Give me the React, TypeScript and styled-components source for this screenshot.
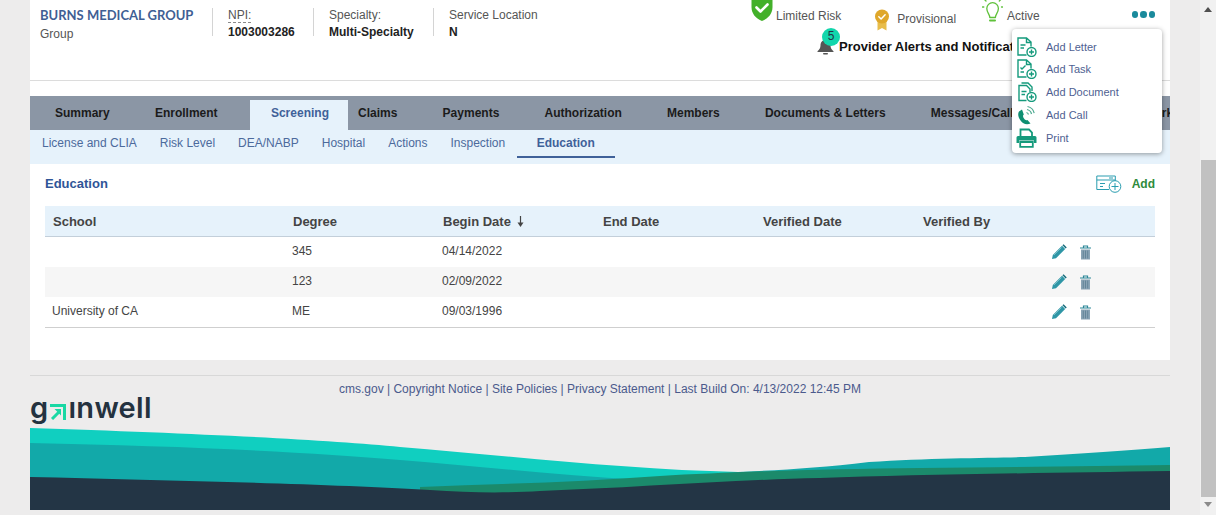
import React from 'react'
import styled, { createGlobalStyle } from 'styled-components'

const GlobalStyle = createGlobalStyle`
  html, body {
    margin: 0;
    padding: 0;
    height: 515px;
    overflow: hidden;
    background: #edecec;
    font-family: "Liberation Sans", Arial, sans-serif;
  }
`

const Shell = styled.div`
  display: flex;
  width: 1216px;
  height: 515px;
  overflow: hidden;
`

const Main = styled.div`
  flex: 1;
  min-width: 0;
  padding: 0 30px;
`

const Panel = styled.div`
  height: 360px;
  background: #fff;
`

/* header */

const Header = styled.header`
  position: relative;
  display: flex;
  justify-content: space-between;
  height: 80px;
  border-bottom: 1px solid #dcdcdc;
  margin-bottom: 15px;
`

const MemberInfo = styled.div`
  display: flex;
  align-items: flex-start;
  padding: 8px 0 0 10px;
`

const MemberName = styled.div`
  width: 172px;
  flex: none;
`

const Name = styled.div`
  font-family: Lato, "Liberation Sans", sans-serif;
  font-size: 13px;
  font-weight: 700;
  line-height: 14px;
  color: #3f5f94;
`

const NameType = styled.div`
  margin-top: 5px;
  font-size: 12px;
  line-height: 14px;
  color: #555;
`

const InfoCell = styled.div<{ $width: number }>`
  flex: none;
  box-sizing: border-box;
  width: ${(p) => p.$width}px;
  height: 28px;
  padding-left: 15px;
  border-left: 1px solid #d4d4d4;
`

const InfoLabel = styled.div<{ $dashed?: boolean }>`
  width: fit-content;
  font-size: 12px;
  line-height: 14px;
  color: #555;
  border-bottom: 1px ${(p) => (p.$dashed ? 'dashed #8a8a8a' : 'solid transparent')};
`

const InfoValue = styled.div`
  margin-top: 2px;
  font-size: 12px;
  font-weight: 700;
  line-height: 14px;
  color: #222;
`

const Alerts = styled.div`
  width: 419px;
  flex: none;
`

const StatusRow = styled.div`
  display: flex;
  align-items: flex-start;
  height: 32px;
`

const Status = styled.div<{ $left: number; $top: number; $gap: number }>`
  display: flex;
  align-items: flex-start;
  gap: ${(p) => p.$gap}px;
  margin: ${(p) => p.$top}px 0 0 ${(p) => p.$left}px;
  font-size: 12px;
  line-height: 14px;
  color: #555;
  white-space: nowrap;

  svg {
    flex: none;
    display: block;
  }
`

const StatusLabel = styled.span<{ $top: number }>`
  display: block;
  margin-top: ${(p) => p.$top}px;
`

const Dots = styled.div`
  display: flex;
  gap: 2px;
  margin: 11px 0 0 92px;

  i {
    width: 6.5px;
    height: 6.5px;
    border-radius: 50%;
    background: #1a8a9c;
  }
`

const NoticeRow = styled.div`
  display: flex;
  align-items: center;
  height: 16px;
  margin: 7px 0 0 66px;
  white-space: nowrap;
`

const BellWrap = styled.div`
  position: relative;
  width: 22px;
  height: 16px;
  flex: none;

  svg {
    display: block;
  }
`

const Badge = styled.div`
  position: absolute;
  top: -11px;
  left: 5px;
  width: 18px;
  height: 18px;
  border-radius: 50%;
  background: #12d6ac;
  font-size: 12px;
  line-height: 17px;
  text-align: center;
  color: #234;
`

const NoticeText = styled.div`
  font-size: 13px;
  font-weight: 700;
  line-height: 16px;
  color: #111;
`

const Menu = styled.div`
  position: absolute;
  z-index: 5;
  top: 29px;
  right: 8px;
  box-sizing: border-box;
  width: 150px;
  height: 124px;
  padding: 6.3px 0 0 4px;
  background: #fff;
  border-radius: 4px;
  box-shadow: 0 1px 5px rgba(0, 0, 0, 0.38);
`

const MenuItem = styled.div`
  display: flex;
  align-items: center;
  gap: 9px;
  height: 22.75px;
  font-size: 11px;
  color: #4f5f92;

  svg {
    flex: none;
    display: block;
  }
`

/* tabs */

const TabBar = styled.nav`
  display: flex;
  align-items: flex-end;
  height: 34px;
  padding-left: 2.4px;
  overflow: hidden;
  background: #8b96a5;
  white-space: nowrap;
`

const Tab = styled.div<{ $active?: boolean; $pushed?: boolean }>`
  flex: none;
  height: ${(p) => (p.$active ? 30 : 34)}px;
  padding: ${(p) => (p.$active ? '0 19.5px 0 20.5px' : '0 22.6px')};
  margin: ${(p) => (p.$active ? '0 -13px 0 10.3px' : p.$pushed ? '0 0 0 78px' : 0)};
  font-size: 12px;
  font-weight: 700;
  line-height: ${(p) => (p.$active ? 26 : 34)}px;
  color: ${(p) => (p.$active ? '#3f6199' : '#1b1b1b')};
  background: ${(p) => (p.$active ? '#e6f2fb' : 'transparent')};
`

const SubBar = styled.div`
  display: flex;
  height: 34px;
  padding-left: 0.5px;
  background: #e6f2fb;
  white-space: nowrap;
`

const SubTab = styled.div<{ $active?: boolean }>`
  flex: none;
  box-sizing: border-box;
  height: 28px;
  padding: 0 ${(p) => (p.$active ? 20 : 11.5)}px;
  font-size: 12px;
  font-weight: ${(p) => (p.$active ? 700 : 400)};
  line-height: 27px;
  color: ${(p) => (p.$active ? '#3f6199' : '#4c6a9c')};
  border-bottom: 2px solid ${(p) => (p.$active ? '#3f6199' : 'transparent')};
`

/* education table */

const Content = styled.section`
  padding: 0 15px;
`

const TitleRow = styled.div`
  display: flex;
  align-items: center;
  justify-content: space-between;
  height: 38px;
  margin-bottom: 4px;
`

const Title = styled.h2`
  margin: 0;
  font-size: 13px;
  font-weight: 700;
  color: #2f5597;
`

const AddButton = styled.div`
  display: flex;
  align-items: center;
  gap: 10px;
  padding-top: 2px;
  font-size: 12px;
  font-weight: 700;
  color: #2e8b3c;

  svg {
    display: block;
  }
`

const Row = styled.div<{ $head?: boolean; $alt?: boolean; $last?: boolean }>`
  display: grid;
  grid-template-columns: 240px 150px 160px 160px 160px 130px 1fr;
  align-items: center;
  height: 30px;
  background: ${(p) => (p.$head ? '#e6f2fb' : p.$alt ? '#f6f6f6' : '#fff')};
  border-bottom: ${(p) =>
    p.$head ? '1px solid #c3cfda' : p.$last ? '1px solid #cfcfcf' : 'none'};
`

const HeadCell = styled.div`
  display: flex;
  align-items: center;
  gap: 5px;
  padding-left: 8px;
  font-size: 13px;
  font-weight: 700;
  color: #444;

  svg {
    display: block;
  }
`

const Cell = styled.div`
  padding: 0 0 2px 7px;
  font-size: 12px;
  color: #444;
`

const Actions = styled.div`
  display: flex;
  align-items: center;
  gap: 12px;
  padding-left: 6px;

  svg {
    display: block;
  }
`

/* footer */

const Footer = styled.footer`
  margin-top: 15px;
  border-top: 1px solid #d8d8d8;
`

const FooterLinks = styled.div`
  padding-top: 6px;
  font-size: 12px;
  line-height: 14px;
  text-align: center;
  color: #4b5a8c;
`

const Logo = styled.div`
  display: flex;
  align-items: flex-end;
  box-sizing: border-box;
  height: 32px;
  padding-bottom: 2px;
  font-family: Inter, "Liberation Sans", sans-serif;
  font-size: 29px;
  font-weight: 600;
  line-height: 36px;
  letter-spacing: 0.3px;
  color: #24323f;

  svg {
    display: block;
    flex: none;
    margin: 0 2px 6px 2px;
  }
`

const Wave = styled.svg`
  display: block;
  width: 1140px;
  height: 82px;
`

/* fake browser scrollbar, the shot was taken with the page scrolled */

const Scrollbar = styled.div`
  flex: none;
  display: flex;
  flex-direction: column;
  align-items: center;
  width: 16px;
  height: 515px;
  background: #f1f1f1;
`

const ScrollArrow = styled.div<{ $down?: boolean }>`
  flex: none;
  width: 0;
  height: 0;
  margin-top: ${(p) => (p.$down ? 5 : 7)}px;
  border-left: 4px solid transparent;
  border-right: 4px solid transparent;
  border-top: ${(p) => (p.$down ? '5px solid #8b8b8b' : 'none')};
  border-bottom: ${(p) => (p.$down ? 'none' : '5px solid #505050')};
`

const ScrollThumb = styled.div`
  flex: none;
  width: 15px;
  height: 337px;
  margin-top: 148px;
  background: #c1c1c1;
`

/* icons */

const Shield = () => (
  <svg width="22" height="25" viewBox="0 0 22 25">
    <path d="M11 0 21.5 3.5V11c0 7-4.5 11.500-10.500 14C5 22.500.5 18 .5 11V3.500z" fill="#43b02a" />
    <path d="M5.500 11.500l4 4 7-7" fill="none" stroke="#fff" strokeWidth="2.600" strokeLinecap="round" strokeLinejoin="round" />
  </svg>
)

const Medal = () => (
  <svg width="16" height="22" viewBox="0 0 16 22">
    <path d="M3.500 12v9.500L8 19l4.500 2.500V12z" fill="#e8bd4a" />
    <circle cx="8" cy="7.500" r="7" fill="#dfa72a" />
    <path d="M4.800 7.800l2.300 2.200 4-4.200" fill="none" stroke="#fff" strokeWidth="1.500" strokeLinecap="round" strokeLinejoin="round" />
  </svg>
)

const Bulb = () => (
  <svg width="21" height="24" viewBox="0 0 21 24" fill="none" stroke="#5fc13a" strokeWidth="1.300" strokeLinecap="round" strokeLinejoin="round">
    <path d="M7.800 19.500c0-3-3-5-3-9a5.800 5.800 0 0 1 11.600 0c0 4-3 6-3 9z" />
    <path d="M8 22.500h5" strokeWidth="2" />
    <path d="M2.500 1.500 4 3M18.800 1.500 17.300 3M.5 9h1.300M19.500 9h1" />
  </svg>
)

const Bell = () => (
  <svg width="17" height="16" viewBox="0 0 17 16">
    <path d="M8.500 1C5 1 3.500 3.500 3.500 6.500c0 2.500-1.200 4-3 5.800v.7h16v-.7c-1.800-1.800-3-3.300-3-5.800C13.500 3.500 12 1 8.500 1z" fill="#555" />
    <rect x="6" y="14" width="5" height="1.600" rx=".8" fill="#555" />
  </svg>
)

const docPlus = (
  <>
    <circle cx="15.500" cy="15" r="4.500" fill="#fff" />
    <path d="M15.500 12.500v5M13 15h5" />
  </>
)

const LetterIcon = () => (
  <svg width="21" height="20" viewBox="0 0 21 20" fill="none" stroke="#159a7c" strokeWidth="1.400">
    <path d="M10.500 18H2V1h8.500L15 5v4.500M10.500 1v4.500H15" />
    <path d="M4.500 8h5M4.500 11h3.500" />
    {docPlus}
  </svg>
)

const TaskIcon = () => (
  <svg width="21" height="20" viewBox="0 0 21 20" fill="none" stroke="#159a7c" strokeWidth="1.400">
    <path d="M10.500 18H2V1h8.500L15 5v4.500M10.500 1v4.500H15" />
    <path d="M4.500 8.500l1.500 1.500 3.500-3.500M4.500 13h3.500" />
    {docPlus}
  </svg>
)

const DocumentIcon = () => (
  <svg width="21" height="20" viewBox="0 0 21 20" fill="none" stroke="#159a7c" strokeWidth="1.400">
    <path d="M10.500 18.500H3v-15h7.500l3.500 3.500v3" />
    <path d="M5.500 1h6.500l4 4v4" />
    <path d="M5.500 9.500h5M5.500 12.500h3.500" />
    {docPlus}
  </svg>
)

const CallIcon = () => (
  <svg width="21" height="20" viewBox="0 0 21 20" fill="none">
    <path d="M6 4.500 3 6.500c-2 3 0 8.500 4 11.500 2.500 1.500 5 1.500 7.500.5l-3-3.500c-1.500.5-2.500 0-3.500-1.500S6.500 10.500 7.800 9.500z" fill="#0f8f72" />
    <path d="M10.500 7.500c1 .3 1.700 1 2 2M11 4.500c2.300.5 4 2.200 4.500 4.500M11.500 1.500c3.500.7 6 3.200 6.700 6.700" stroke="#4aa98f" strokeWidth="1.200" />
  </svg>
)

const PrintIcon = () => (
  <svg width="21" height="20" viewBox="0 0 21 20">
    <path d="M4.500 8V1.500h8.500l3 3V8" fill="none" stroke="#159a7c" strokeWidth="1.800" />
    <path d="M2 8h17a1.500 1.500 0 0 1 1.500 1.500V15H18v-2.500H3V15H.5V9.500A1.500 1.500 0 0 1 2 8z" fill="#159a7c" />
    <path d="M4.200 14h12.600v4.800H4.200z" fill="none" stroke="#159a7c" strokeWidth="1.800" />
  </svg>
)

const AddIcon = () => (
  <svg width="26" height="18" viewBox="0 0 26 18" fill="none" stroke="#2a9db0" strokeWidth="1">
    <path d="M13 14.500H.8V1h18.500v5.500M.8 5h18.500" />
    <path d="M4 8.500h5M4 11.500h3M13 3h4" />
    <circle cx="19" cy="11.500" r="5.800" fill="#fff" />
    <path d="M19 8v7M15.500 11.500h7" />
  </svg>
)

const EditIcon = () => (
  <svg width="16" height="16" viewBox="0 0 16 16">
    <path d="M1 15l.8-4L11 1.800l3.200 3.200L5 14.200z" fill="#2f96a6" />
    <path d="M3 11l7.500-7.500" stroke="#8cc6cf" strokeWidth=".8" />
    <path d="M12 .8 15.200 4" stroke="#176d7d" strokeWidth="1.600" />
  </svg>
)

const TrashIcon = () => (
  <svg width="13" height="15" viewBox="0 0 13 15">
    <path d="M1 3h11M4.500 2.500V1h4v1.500" fill="none" stroke="#2c8798" strokeWidth="1.200" />
    <path d="M2 4.500h9V14.500H2z" fill="#8aa3b5" />
    <path d="M4.300 5.500v8M6.500 5.500v8M8.700 5.500v8" stroke="#5b7d92" strokeWidth=".8" />
  </svg>
)

const SortArrow = () => (
  <svg width="9" height="11" viewBox="0 0 9 11">
    <path d="M4.500 0v8" stroke="#444" strokeWidth="1.200" />
    <path d="M1.500 6.500h6L4.500 11z" fill="#444" />
  </svg>
)

const LogoArrow = () => (
  <svg width="16" height="16" viewBox="0 0 16 16">
    <path d="M0 1.500h14.500V16" fill="none" stroke="#19d8a4" strokeWidth="3" />
    <path d="M2 15 10 7" fill="none" stroke="#19d8a4" strokeWidth="3" />
    <path d="M4.500 5h6.500v6.500z" fill="#19d8a4" />
  </svg>
)

const tabs = [
  'Summary',
  'Enrollment',
  'Screening',
  'Claims',
  'Payments',
  'Authorization',
  'Members',
  'Documents & Letters',
  'Messages/Calls',
  'Workflow',
]

const subTabs = [
  'License and CLIA',
  'Risk Level',
  'DEA/NABP',
  'Hospital',
  'Actions',
  'Inspection',
  'Education',
]

const rows = [
  { school: '', degree: '345', begin: '04/14/2022' },
  { school: '', degree: '123', begin: '02/09/2022' },
  { school: 'University of CA', degree: 'ME', begin: '09/03/1996' },
]

const App: React.FC = () => (
  <Shell>
    <GlobalStyle />
    <Main>
      <Panel>
        <Header>
          <MemberInfo>
            <MemberName>
              <Name>BURNS MEDICAL GROUP</Name>
              <NameType>Group</NameType>
            </MemberName>
            <InfoCell $width={101}>
              <InfoLabel $dashed>NPI:</InfoLabel>
              <InfoValue>1003003286</InfoValue>
            </InfoCell>
            <InfoCell $width={120}>
              <InfoLabel>Specialty:</InfoLabel>
              <InfoValue>Multi-Specialty</InfoValue>
            </InfoCell>
            <InfoCell $width={120}>
              <InfoLabel>Service Location</InfoLabel>
              <InfoValue>N</InfoValue>
            </InfoCell>
          </MemberInfo>
          <Alerts>
            <StatusRow>
              <Status $left={0} $top={-4} $gap={3}>
                <Shield />
                <StatusLabel $top={13}>Limited Risk</StatusLabel>
              </Status>
              <Status $left={33} $top={9} $gap={7}>
                <Medal />
                <StatusLabel $top={3}>Provisional</StatusLabel>
              </Status>
              <Status $left={26} $top={-2} $gap={4}>
                <Bulb />
                <StatusLabel $top={11}>Active</StatusLabel>
              </Status>
              <Dots>
                <i />
                <i />
                <i />
              </Dots>
            </StatusRow>
            <NoticeRow>
              <BellWrap>
                <Bell />
                <Badge>5</Badge>
              </BellWrap>
              <NoticeText>Provider Alerts and Notifications</NoticeText>
            </NoticeRow>
          </Alerts>
          <Menu>
            <MenuItem>
              <LetterIcon />
              Add Letter
            </MenuItem>
            <MenuItem>
              <TaskIcon />
              Add Task
            </MenuItem>
            <MenuItem>
              <DocumentIcon />
              Add Document
            </MenuItem>
            <MenuItem>
              <CallIcon />
              Add Call
            </MenuItem>
            <MenuItem>
              <PrintIcon />
              Print
            </MenuItem>
          </Menu>
        </Header>

        <TabBar>
          {tabs.map((t) => (
            <Tab key={t} $active={t === 'Screening'} $pushed={t === 'Workflow'}>
              {t}
            </Tab>
          ))}
        </TabBar>
        <SubBar>
          {subTabs.map((t) => (
            <SubTab key={t} $active={t === 'Education'}>
              {t}
            </SubTab>
          ))}
        </SubBar>

        <Content>
          <TitleRow>
            <Title>Education</Title>
            <AddButton>
              <AddIcon />
              Add
            </AddButton>
          </TitleRow>
          <Row $head>
            <HeadCell>School</HeadCell>
            <HeadCell>Degree</HeadCell>
            <HeadCell>
              Begin Date
              <SortArrow />
            </HeadCell>
            <HeadCell>End Date</HeadCell>
            <HeadCell>Verified Date</HeadCell>
            <HeadCell>Verified By</HeadCell>
            <HeadCell />
          </Row>
          {rows.map((r, i) => (
            <Row key={r.begin} $alt={i === 1} $last={i === rows.length - 1}>
              <Cell>{r.school}</Cell>
              <Cell>{r.degree}</Cell>
              <Cell>{r.begin}</Cell>
              <Cell />
              <Cell />
              <Cell />
              <Actions>
                <EditIcon />
                <TrashIcon />
              </Actions>
            </Row>
          ))}
        </Content>
      </Panel>

      <Footer>
        <FooterLinks>
          cms.gov | Copyright Notice | Site Policies | Privacy Statement | Last Build On: 4/13/2022 12:45 PM
        </FooterLinks>
        <Logo>
          g
          <LogoArrow />
          ınwell
        </Logo>
        <Wave viewBox="0 0 1140 82" preserveAspectRatio="none">
          <path
            d="M0 0C160 5 300 12 370 19C480 28 600 42 708 44L1140 40V82H0Z"
            fill="#10cfc0"
          />
          <path
            d="M0 15C150 18 280 24 370 32C450 38 530 48 610 51.500L670 48L708 44C750 42 790 40 839 34C900 30 960 30 995 29C1050 26 1100 22 1140 19V82H0Z"
            fill="#12a9a9"
          />
          <path
            d="M390 59C470 56 550 54 630 48C700 44 790 41 891 40C980 39 1070 38 1140 37V82H390Z"
            fill="#1b8a6b"
          />
          <path
            d="M0 49C130 52 300 56 400 62C440 65 480 65 510 63C600 60 700 52 790 50C880 47 1000 45 1140 43V82H0Z"
            fill="#233545"
          />
        </Wave>
      </Footer>
    </Main>
    <Scrollbar>
      <ScrollArrow />
      <ScrollThumb />
      <ScrollArrow $down />
    </Scrollbar>
  </Shell>
)

export default App
